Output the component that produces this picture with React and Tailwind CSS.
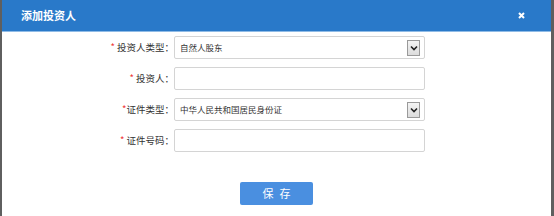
import React from 'react';

const font = { fontFamily: '"Noto Sans CJK SC", "Liberation Sans", sans-serif' };

const SelectBox = ({ value }) => (
  <div className="relative w-[251px] h-[23px] border border-[#d4d4d4] rounded-[2px] bg-white flex items-center px-[5px] text-[8.5px] text-[#333]">
    <span>{value}</span>
    <div className="absolute right-[4px] top-[3px] w-[13px] h-[16px] border border-[#9a9a9a] bg-gradient-to-b from-[#f4f4f4] to-[#dcdcdc] flex items-center justify-center">
      <svg width="8" height="6" viewBox="0 0 8 6">
        <path d="M1 1.5 L4 4.5 L7 1.5" stroke="#222" strokeWidth="1.6" fill="none" />
      </svg>
    </div>
  </div>
);

const TextBox = () => (
  <div className="w-[251px] h-[23px] border border-[#d4d4d4] rounded-[2px] bg-white" />
);

const Row = ({ label, gap = true, children }) => (
  <div className="flex items-center h-[23px]">
    <div className="w-[172px] text-right text-[9.5px] text-[#333]">
      <span className="text-[#e33]">*</span>
      {gap ? ' ' : ''}
      {label}：
    </div>
    <div>{children}</div>
  </div>
);

const App = () => {
  return (
    <div className="w-[554px] h-[216px] flex bg-white" style={font}>
      <div className="w-[2px] bg-[#5f5f5f]" />
      <div className="flex-1 flex flex-col">
        <div className="h-[32px] bg-[#2979c9] border-b border-[#8fbbe6] flex items-center justify-between pl-[19px] pr-[26px]">
          <span className="text-white text-[11px] font-bold">添加投资人</span>
          <svg width="7" height="7" viewBox="0 0 7 7">
            <path d="M1 1 L6 6 M6 1 L1 6" stroke="#fff" strokeWidth="2" />
          </svg>
        </div>
        <div className="flex flex-col gap-[8px] pt-[4px]">
          <Row label="投资人类型">
            <SelectBox value="自然人股东" />
          </Row>
          <Row label="投资人">
            <TextBox />
          </Row>
          <Row label="证件类型" gap={false}>
            <SelectBox value="中华人民共和国居民身份证" />
          </Row>
          <Row label="证件号码">
            <TextBox />
          </Row>
        </div>
        <div className="flex justify-center pt-[30px]">
          <button className="w-[73px] h-[23px] bg-[#4a8fe0] rounded-[2px] text-white text-[11px] tracking-[6px] pl-[6px]">
            保存
          </button>
        </div>
      </div>
      <div className="w-[3px] bg-[#5f5f5f]" />
    </div>
  );
};

export default App;
